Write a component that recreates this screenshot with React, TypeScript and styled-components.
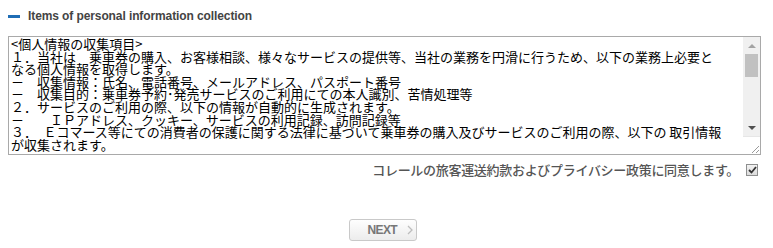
import React from "react";
import styled, { createGlobalStyle } from "styled-components";

const GlobalStyle = createGlobalStyle`
  body {
    margin: 0;
    background: #fff;
  }
`;

const Page = styled.div`
  padding: 8px 12px 0 8px;
  font-family: "Liberation Sans", Arial, sans-serif;
`;

const TitleRow = styled.div`
  display: flex;
  align-items: center;
  height: 16px;
`;

const TitleDash = styled.span`
  width: 12px;
  height: 3px;
  background: #1f6db5;
  margin-right: 8px;
`;

const Title = styled.h3`
  margin: 0;
  font-size: 12px;
  font-weight: bold;
  color: #444;
  letter-spacing: -0.1px;
`;

const TermsBox = styled.div`
  display: flex;
  box-sizing: border-box;
  height: 119px;
  margin-top: 12px;
  border: 1px solid #a9a9a9;
  background: #fff;
`;

const TermsText = styled.div`
  flex: 1;
  padding: 1px 2px;
  overflow: hidden;
  white-space: pre-wrap;
  font-family: "Noto Sans CJK JP", "DejaVu Sans", sans-serif;
  font-size: 13px;
  line-height: 12.6px;
  color: #000;
`;

const ScrollBar = styled.div`
  width: 17px;
  display: flex;
  flex-direction: column;
`;

const ScrollTrack = styled.div`
  flex: 1;
  display: flex;
  flex-direction: column;
  background: #f0f0f0;
`;

const ScrollButton = styled.div<{ $down?: boolean; $disabled?: boolean }>`
  height: 17px;
  display: flex;
  align-items: center;
  justify-content: center;
  &::before {
    content: "";
    border-left: 4px solid transparent;
    border-right: 4px solid transparent;
    ${(p) =>
      p.$down
        ? `border-top: 4px solid ${p.$disabled ? "#a3a3a3" : "#505050"};`
        : `border-bottom: 4px solid ${p.$disabled ? "#a3a3a3" : "#505050"};`}
  }
`;

const ScrollThumb = styled.div`
  height: 23px;
  margin: 0 2px;
  background: #c1c1c1;
`;

const ScrollSpacer = styled.div`
  flex: 1;
`;

const Resizer = styled.div`
  height: 17px;
  background: #fff;
  border-top: 1px solid #e6e6e6;
  display: flex;
  align-items: flex-end;
  justify-content: flex-end;
`;

const AgreeRow = styled.div`
  display: flex;
  justify-content: flex-end;
  align-items: center;
  gap: 7px;
  height: 16px;
  margin-top: 7px;
  padding-right: 3px;
`;

const AgreeText = styled.span`
  font-family: "Noto Sans CJK JP", "Noto Sans", sans-serif;
  font-size: 13px;
  line-height: 16px;
  font-weight: 500;
  letter-spacing: -0.3px;
  color: #555;
`;

const CheckBox = styled.span`
  box-sizing: border-box;
  width: 12px;
  height: 12px;
  border: 1px solid #8e8f8f;
  background: linear-gradient(#f2f2f2, #dcdcdc);
  display: flex;
  align-items: center;
  justify-content: center;
`;

const ButtonRow = styled.div`
  display: flex;
  justify-content: center;
  margin-top: 41px;
  padding-right: 4px;
`;

const NextButton = styled.button`
  box-sizing: border-box;
  width: 68px;
  height: 22px;
  display: inline-flex;
  align-items: center;
  padding: 0 0 0 18px;
  border: 1px solid #c9c9c9;
  border-radius: 3px;
  background: linear-gradient(#fefefe, #ececec);
  color: #777;
  font-family: "Liberation Sans", Arial, sans-serif;
  font-size: 12px;
  font-weight: bold;
  letter-spacing: -0.6px;
  svg {
    margin-left: 10px;
  }
`;

const terms = `<個人情報の収集項目>
１．当社は　乗車券の購入、お客様相談、様々なサービスの提供等、当社の業務を円滑に行うため、以下の業務上必要と
なる個人情報を取得します。
－　収集情報：氏名、電話番号、メールアドレス、パスポート番号
－　収集目的：乗車券予約･発売サービスのご利用にての本人識別、苦情処理等
２．サービスのご利用の際、以下の情報が自動的に生成されます。
－　　ＩＰアドレス、クッキー、サービスの利用記録、訪問記録等
３．　Ｅコマース等にての消費者の保護に関する法律に基づいて乗車券の購入及びサービスのご利用の際、以下の 取引情報
が収集されます。`;

const App = () => {
  return (
    <Page>
      <GlobalStyle />
      <TitleRow>
        <TitleDash />
        <Title>Items of personal information collection</Title>
      </TitleRow>
      <TermsBox>
        <TermsText>{terms}</TermsText>
        <ScrollBar>
          <ScrollTrack>
            <ScrollButton $disabled />
            <ScrollThumb />
            <ScrollSpacer />
            <ScrollButton $down />
          </ScrollTrack>
          <Resizer>
            <svg width="10" height="10" viewBox="0 0 10 10">
              <path d="M9 2 L2 9 M9 6 L6 9" stroke="#9a9a9a" strokeWidth="1" />
            </svg>
          </Resizer>
        </ScrollBar>
      </TermsBox>
      <AgreeRow>
        <AgreeText>コレールの旅客運送約款およびプライバシー政策に同意します。</AgreeText>
        <CheckBox>
          <svg width="9" height="8" viewBox="0 0 9 8">
            <path d="M1 4 L3.5 6.5 L8 1" fill="none" stroke="#333" strokeWidth="1.8" />
          </svg>
        </CheckBox>
      </AgreeRow>
      <ButtonRow>
        <NextButton type="button">
          NEXT
          <svg width="6" height="10" viewBox="0 0 6 10">
            <path d="M1 1 L5 5 L1 9" fill="none" stroke="#bdbdbd" strokeWidth="1.3" />
          </svg>
        </NextButton>
      </ButtonRow>
    </Page>
  );
};

export default App;
